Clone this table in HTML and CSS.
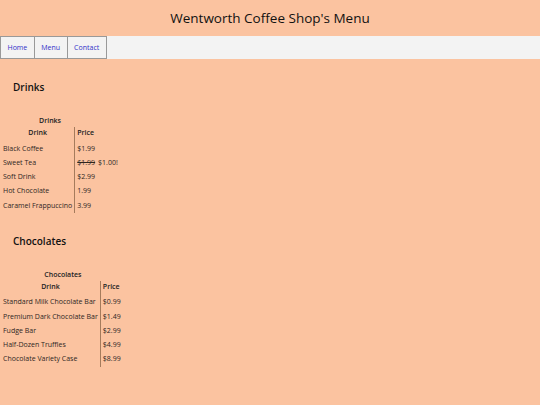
FILE: index.html
```html
<!DOCTYPE html>
<html>
<head>
<meta charset="utf-8">
<link rel="stylesheet" href="styles.css">
</head>
<body>
<header class="top"><h1 class="title">Wentworth Coffee Shop's Menu</h1></header>
<nav class="nav">
  <a class="nav-link" href="#">Home</a>
  <a class="nav-link" href="#">Menu</a>
  <a class="nav-link" href="#">Contact</a>
</nav>
<main class="content">
  <section class="menu-section">
    <h2 class="section-title">Drinks</h2>
    <table class="menu-table">
      <caption class="caption">Drinks</caption>
      <thead>
        <tr><th class="col-name">Drink</th><th class="col-price">Price</th></tr>
      </thead>
      <tbody>
        <tr><td class="col-name">Black Coffee</td><td class="col-price">$1.99</td></tr>
        <tr><td class="col-name">Sweet Tea</td><td class="col-price"><span class="sale"><del>$1.99</del><span class="sale-tag">$1.00!</span></span></td></tr>
        <tr><td class="col-name">Soft Drink</td><td class="col-price">$2.99</td></tr>
        <tr><td class="col-name">Hot Chocolate</td><td class="col-price">1.99</td></tr>
        <tr><td class="col-name">Caramel Frappuccino</td><td class="col-price">3.99</td></tr>
      </tbody>
    </table>
  </section>
  <section class="menu-section">
    <h2 class="section-title">Chocolates</h2>
    <table class="menu-table">
      <caption class="caption">Chocolates</caption>
      <thead>
        <tr><th class="col-name">Drink</th><th class="col-price">Price</th></tr>
      </thead>
      <tbody>
        <tr><td class="col-name">Standard Milk Chocolate Bar</td><td class="col-price">$0.99</td></tr>
        <tr><td class="col-name">Premium Dark Chocolate Bar</td><td class="col-price">$1.49</td></tr>
        <tr><td class="col-name">Fudge Bar</td><td class="col-price">$2.99</td></tr>
        <tr><td class="col-name">Half-Dozen Truffles</td><td class="col-price">$4.99</td></tr>
        <tr><td class="col-name">Chocolate Variety Case</td><td class="col-price">$8.99</td></tr>
      </tbody>
    </table>
  </section>
</main>
</body>
</html>
```

FILE: styles.css
```css
html, body {
  margin: 0;
  padding: 0;
  background: #fbc3a0;
  font-family: "Open Sans", "DejaVu Sans", sans-serif;
  color: #222;
}
.top {
  height: 36px;
  display: flex;
  align-items: center;
  justify-content: center;
}
.title {
  margin: 0;
  font-size: 13.5px;
  font-weight: 400;
  color: #111;
}
.nav {
  display: flex;
  height: 23px;
  background: #f3f3f3;
}
.nav-link {
  display: flex;
  align-items: center;
  padding: 0 6.5px;
  border: 1px solid #999;
  font-size: 7px;
  color: #3030c8;
  text-decoration: none;
}
.nav-link + .nav-link {
  border-left: none;
}
.content {
  padding: 0 0 0 3px;
}
.menu-section {
  padding-top: 20px;
}
.section-title {
  margin: 0 0 0 10px;
  font-size: 10px;
  font-weight: 600;
  color: #111;
  line-height: 16px;
}
.menu-table {
  margin-top: 20px;
  border-collapse: collapse;
  font-size: 7px;
  color: #2e261f;
}
.caption {
  font-weight: 600;
  line-height: 12px;
  color: #222;
}
.menu-table th {
  font-weight: 600;
  color: #222;
  line-height: 12px;
  padding: 0 2px 0 0;
}
.menu-table td {
  line-height: 14.25px;
  padding: 0 2px 0 0;
  white-space: nowrap;
}
.menu-table thead th {
  padding-bottom: 2.5px;
}
.col-name {
  text-align: left;
}
th.col-name {
  text-align: center;
}
.col-price {
  border-left: 1px solid #a57b5c;
  padding-left: 2px !important;
  text-align: left;
}
.sale {
  position: relative;
}
.sale-tag {
  position: absolute;
  left: 100%;
  margin-left: 3px;
  top: 0;
  line-height: normal;
}
```
